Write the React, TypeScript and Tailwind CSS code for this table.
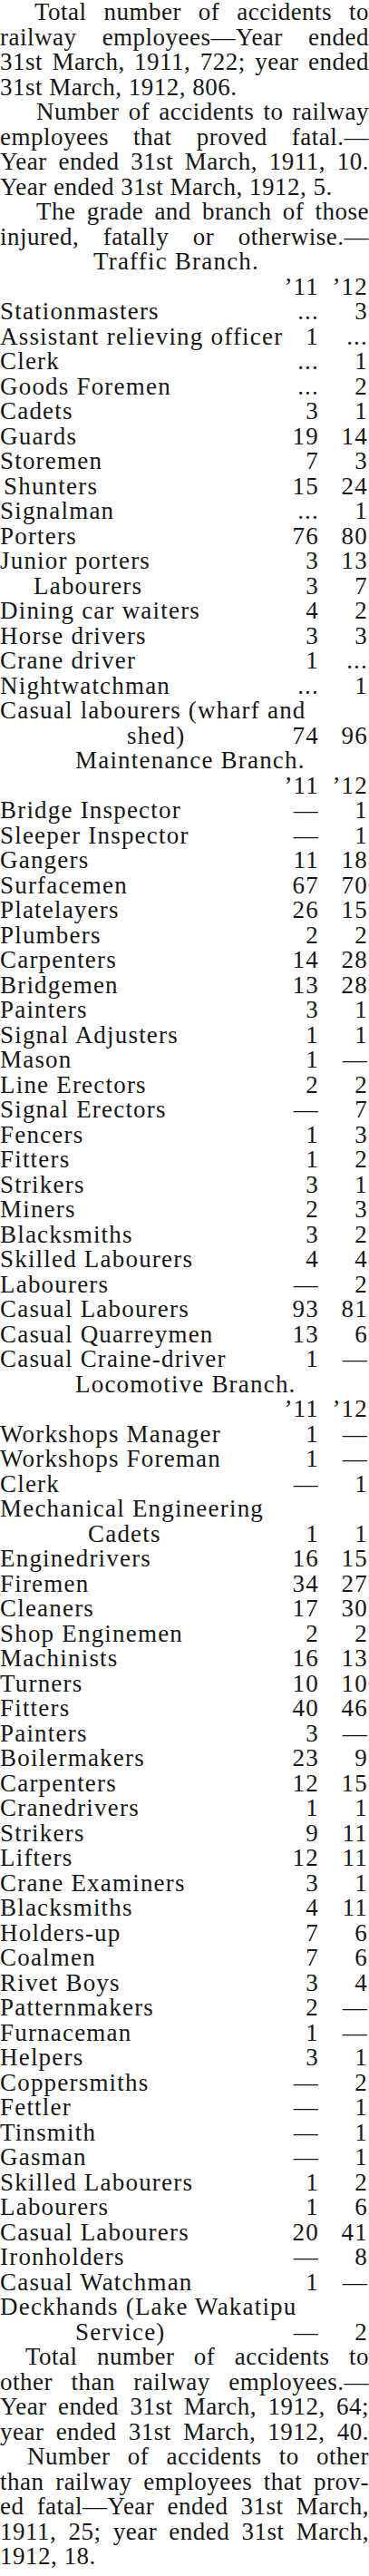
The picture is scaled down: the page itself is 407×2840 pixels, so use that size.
import React from "react"

type Item = { label: string; a?: string; b?: string; pad?: string; wrap?: string }

const traffic: Item[] = [
  { label: "Stationmasters", a: "...", b: "3" },
  { label: "Assistant relieving officer", a: "1", b: "..." },
  { label: "Clerk", a: "...", b: "1" },
  { label: "Goods Foremen", a: "...", b: "2" },
  { label: "Cadets", a: "3", b: "1" },
  { label: "Guards", a: "19", b: "14" },
  { label: "Storemen", a: "7", b: "3" },
  { label: "Shunters", a: "15", b: "24", pad: "pl-[4px]" },
  { label: "Signalman", a: "...", b: "1" },
  { label: "Porters", a: "76", b: "80" },
  { label: "Junior porters", a: "3", b: "13" },
  { label: "Labourers", a: "3", b: "7", pad: "pl-[37px]" },
  { label: "Dining car waiters", a: "4", b: "2" },
  { label: "Horse drivers", a: "3", b: "3" },
  { label: "Crane driver", a: "1", b: "..." },
  { label: "Nightwatchman", a: "...", b: "1" },
  { wrap: "Casual labourers (wharf and", label: "shed)", a: "74", b: "96", pad: "pl-[140px]" },
]

const maintenance: Item[] = [
  { label: "Bridge Inspector", a: "—", b: "1" },
  { label: "Sleeper Inspector", a: "—", b: "1" },
  { label: "Gangers", a: "11", b: "18" },
  { label: "Surfacemen", a: "67", b: "70" },
  { label: "Platelayers", a: "26", b: "15" },
  { label: "Plumbers", a: "2", b: "2" },
  { label: "Carpenters", a: "14", b: "28" },
  { label: "Bridgemen", a: "13", b: "28" },
  { label: "Painters", a: "3", b: "1" },
  { label: "Signal Adjusters", a: "1", b: "1" },
  { label: "Mason", a: "1", b: "—" },
  { label: "Line Erectors", a: "2", b: "2" },
  { label: "Signal Erectors", a: "—", b: "7" },
  { label: "Fencers", a: "1", b: "3" },
  { label: "Fitters", a: "1", b: "2" },
  { label: "Strikers", a: "3", b: "1" },
  { label: "Miners", a: "2", b: "3" },
  { label: "Blacksmiths", a: "3", b: "2" },
  { label: "Skilled Labourers", a: "4", b: "4" },
  { label: "Labourers", a: "—", b: "2" },
  { label: "Casual Labourers", a: "93", b: "81" },
  { label: "Casual Quarreymen", a: "13", b: "6" },
  { label: "Casual Craine-driver", a: "1", b: "—" },
]

const locomotive: Item[] = [
  { label: "Workshops Manager", a: "1", b: "—" },
  { label: "Workshops Foreman", a: "1", b: "—" },
  { label: "Clerk", a: "—", b: "1" },
  { wrap: "Mechanical Engineering", label: "Cadets", a: "1", b: "1", pad: "pl-[97px]" },
  { label: "Enginedrivers", a: "16", b: "15" },
  { label: "Firemen", a: "34", b: "27" },
  { label: "Cleaners", a: "17", b: "30" },
  { label: "Shop Enginemen", a: "2", b: "2" },
  { label: "Machinists", a: "16", b: "13" },
  { label: "Turners", a: "10", b: "10" },
  { label: "Fitters", a: "40", b: "46" },
  { label: "Painters", a: "3", b: "—" },
  { label: "Boilermakers", a: "23", b: "9" },
  { label: "Carpenters", a: "12", b: "15" },
  { label: "Cranedrivers", a: "1", b: "1" },
  { label: "Strikers", a: "9", b: "11" },
  { label: "Lifters", a: "12", b: "11" },
  { label: "Crane Examiners", a: "3", b: "1" },
  { label: "Blacksmiths", a: "4", b: "11" },
  { label: "Holders-up", a: "7", b: "6" },
  { label: "Coalmen", a: "7", b: "6" },
  { label: "Rivet Boys", a: "3", b: "4" },
  { label: "Patternmakers", a: "2", b: "—" },
  { label: "Furnaceman", a: "1", b: "—" },
  { label: "Helpers", a: "3", b: "1" },
  { label: "Coppersmiths", a: "—", b: "2" },
  { label: "Fettler", a: "—", b: "1" },
  { label: "Tinsmith", a: "—", b: "1" },
  { label: "Gasman", a: "—", b: "1" },
  { label: "Skilled Labourers", a: "1", b: "2" },
  { label: "Labourers", a: "1", b: "6" },
  { label: "Casual Labourers", a: "20", b: "41" },
  { label: "Ironholders", a: "—", b: "8" },
  { label: "Casual Watchman", a: "1", b: "—" },
  { wrap: "Deckhands (Lake Wakatipu", label: "Service)", a: "—", b: "2", pad: "pl-[83px]" },
]

// one printed line, spread edge to edge unless it ends the paragraph
function Line({ text, last, indent = "" }: { text: string; last?: boolean; indent?: string }) {
  return (
    <div className={`${indent} tracking-[0.5px] ${last ? "text-left" : "text-justify [text-align-last:justify]"}`}>
      {text}
    </div>
  )
}

function Para({ lines, indent, justifyLast }: { lines: string[]; indent: string; justifyLast?: boolean }) {
  return (
    <div>
      {lines.map((l, i) => (
        <Line key={i} text={l} indent={i === 0 ? indent : ""} last={i === lines.length - 1 && !justifyLast} />
      ))}
    </div>
  )
}

function Row({ label, a, b, pad = "" }: Item) {
  return (
    <div className="grid grid-cols-[minmax(0,1fr)_52px_55px] whitespace-nowrap">
      <span className={pad}>{label}</span>
      <span className="text-right">{a}</span>
      <span className="text-right pr-[1px]">{b}</span>
    </div>
  )
}

function Section({ title, pad, rows }: { title: string; pad: string; rows: Item[] }) {
  return (
    <div className="tracking-[1.2px]">
      <div className={pad}>{title}</div>
      <div className="grid grid-cols-[minmax(0,1fr)_52px_55px]">
        <span />
        <span className="text-right">’11</span>
        <span className="text-right pr-[1px]">’12</span>
      </div>
      {rows.map((r, i) => (
        <div key={i}>
          {r.wrap && <div className="whitespace-nowrap">{r.wrap}</div>}
          <Row {...r} />
        </div>
      ))}
    </div>
  )
}

export default function App() {
  return (
    <div className="w-[407px] bg-white text-[#161616] font-['Liberation_Serif','Times_New_Roman',serif] text-[27px] leading-[27.5px]">
      <Para
        indent="pl-[38px]"
        lines={[
          "Total number of accidents to",
          "railway employees—Year ended",
          "31st March, 1911, 722; year ended",
          "31st March, 1912, 806.",
        ]}
      />
      <Para
        indent="pl-[40px]"
        lines={[
          "Number of accidents to railway",
          "employees that proved fatal.—",
          "Year ended 31st March, 1911, 10.",
          "Year ended 31st March, 1912, 5.",
        ]}
      />
      <Para
        indent="pl-[40px]"
        justifyLast
        lines={["The grade and branch of those", "injured, fatally or otherwise.—"]}
      />

      <Section title="Traffic Branch." pad="pl-[103px]" rows={traffic} />
      <Section title="Maintenance Branch." pad="pl-[83px]" rows={maintenance} />
      <Section title="Locomotive Branch." pad="pl-[83px]" rows={locomotive} />

      <Para
        indent="pl-[28px]"
        justifyLast
        lines={[
          "Total number of accidents to",
          "other than railway employees.—",
          "Year ended 31st March, 1912, 64;",
          "year ended 31st March, 1912, 40.",
        ]}
      />
      <Para
        indent="pl-[30px]"
        lines={[
          "Number of accidents to other",
          "than railway employees that prov-",
          "ed fatal—Year ended 31st March,",
          "1911, 25; year ended 31st March,",
          "1912, 18.",
        ]}
      />
    </div>
  )
}
